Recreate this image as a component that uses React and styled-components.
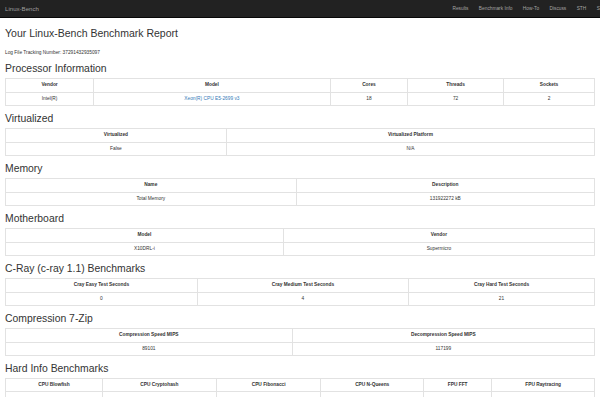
import styled, { createGlobalStyle } from 'styled-components';

const GlobalStyle = createGlobalStyle`
    html, body {
        margin: 0;
        padding: 0;
        background: #fff;
        overflow-x: hidden;
    }
    body {
        font-family: "Liberation Sans", Arial, sans-serif;
        color: #333;
        font-size: 4.8px;
    }
`;

const Navbar = styled.nav`
    height: 18px;
    background: #222;
    border-bottom: 1px solid #080808;
    box-sizing: border-box;
    overflow: hidden;
`;

const NavInner = styled.div`
    display: flex;
    align-items: center;
    justify-content: space-between;
    height: 100%;
    width: calc(100% + 34px);
    padding: 0 5px;
    box-sizing: border-box;
`;

const Brand = styled.a`
    color: #9d9d9d;
    font-size: 6.1px;
    text-decoration: none;
`;

const NavUl = styled.ul`
    display: flex;
    margin: 0;
    padding: 0;
    list-style: none;
`;

const NavItem = styled.li`
    color: #a4a4a4;
    font-size: 4.8px;
    padding: 0 5.2px;
    white-space: nowrap;
`;

const Page = styled.main`
    padding: 0 5px;
`;

const Title = styled.h1`
    font-size: 10.5px;
    line-height: 12px;
    font-weight: 400;
    margin: 9px 0 0;
`;

const TrackLine = styled.p`
    font-size: 4.8px;
    line-height: 7px;
    margin: 10.3px 0 0.3px;
`;

const SectionTitle = styled.h3`
    font-size: 10.4px;
    line-height: 12px;
    font-weight: 400;
    margin: 6.4px 0 3.2px;
`;

const Table = styled.table`
    width: 100%;
    table-layout: fixed;
    border-collapse: collapse;
    border: 1px solid #e2e2e2;
`;

const Th = styled.th`
    width: ${p => (p.$w / 590) * 100}%;
    font-weight: 700;
    font-size: 4.8px;
    line-height: 6.7px;
    padding: 3px 2px;
    text-align: center;
    border: 1px solid #e2e2e2;
    color: #333;
    white-space: nowrap;
    overflow: hidden;
`;

const Td = styled.td`
    font-size: 4.8px;
    line-height: 6.7px;
    padding: 3px 2px;
    text-align: center;
    border: 1px solid #e2e2e2;
    color: ${p => (p.$link ? '#337ab7' : '#333')};
    white-space: nowrap;
    overflow: hidden;
`;

const sections = [
    {
        title: 'Processor Information',
        cols: [['Vendor', 87], ['Model', 242], ['Cores', 76], ['Threads', 95], ['Sockets', 90]],
        row: ['Intel(R)', 'Xeon(R) CPU E5-2699 v3', '18', '72', '2'],
        link: 1,
    },
    {
        title: 'Virtualized',
        cols: [['Virtualized', 220], ['Virtualized Platform', 370]],
        row: ['False', 'N/A'],
    },
    {
        title: 'Memory',
        cols: [['Name', 291], ['Description', 299]],
        row: ['Total Memory', '131922272 kB'],
    },
    {
        title: 'Motherboard',
        cols: [['Model', 278], ['Vendor', 312]],
        row: ['X10DRL-i', 'Supermicro'],
    },
    {
        title: 'C-Ray (c-ray 1.1) Benchmarks',
        cols: [['Cray Easy Test Seconds', 192], ['Cray Medium Test Seconds', 212], ['Cray Hard Test Seconds', 186]],
        row: ['0', '4', '21'],
    },
    {
        title: 'Compression 7-Zip',
        cols: [['Compression Speed MIPS', 287], ['Decompression Speed MIPS', 303]],
        row: ['89101', '117199'],
    },
    {
        title: 'Hard Info Benchmarks',
        cols: [['CPU Blowfish', 97], ['CPU Cryptohash', 115], ['CPU Fibonacci', 105], ['CPU N-Queens', 103], ['FPU FFT', 67], ['FPU Raytracing', 103]],
        row: ['\u00a0', '\u00a0', '\u00a0', '\u00a0', '\u00a0', '\u00a0'],
    },
];

const navLinks = ['Results', 'Benchmark Info', 'How-To', 'Discuss', 'STH', 'STH Forums'];

const App = () => {
    return (
        <>
            <GlobalStyle />
            <Navbar>
                <NavInner>
                    <Brand href="#">Linux-Bench</Brand>
                    <NavUl>
                        {navLinks.map(l => (
                            <NavItem key={l}>{l}</NavItem>
                        ))}
                    </NavUl>
                </NavInner>
            </Navbar>
            <Page>
                <Title>Your Linux-Bench Benchmark Report</Title>
                <TrackLine>Log File Tracking Number: 37291432935097</TrackLine>
                {sections.map(s => (
                    <section key={s.title}>
                        <SectionTitle>{s.title}</SectionTitle>
                        <Table>
                            <thead>
                                <tr>
                                    {s.cols.map(([label, w]) => (
                                        <Th key={label} $w={w}>{label}</Th>
                                    ))}
                                </tr>
                            </thead>
                            <tbody>
                                <tr>
                                    {s.row.map((v, i) => (
                                        <Td key={i} $link={s.link === i}>{v}</Td>
                                    ))}
                                </tr>
                            </tbody>
                        </Table>
                    </section>
                ))}
            </Page>
        </>
    );
};

export default App;
